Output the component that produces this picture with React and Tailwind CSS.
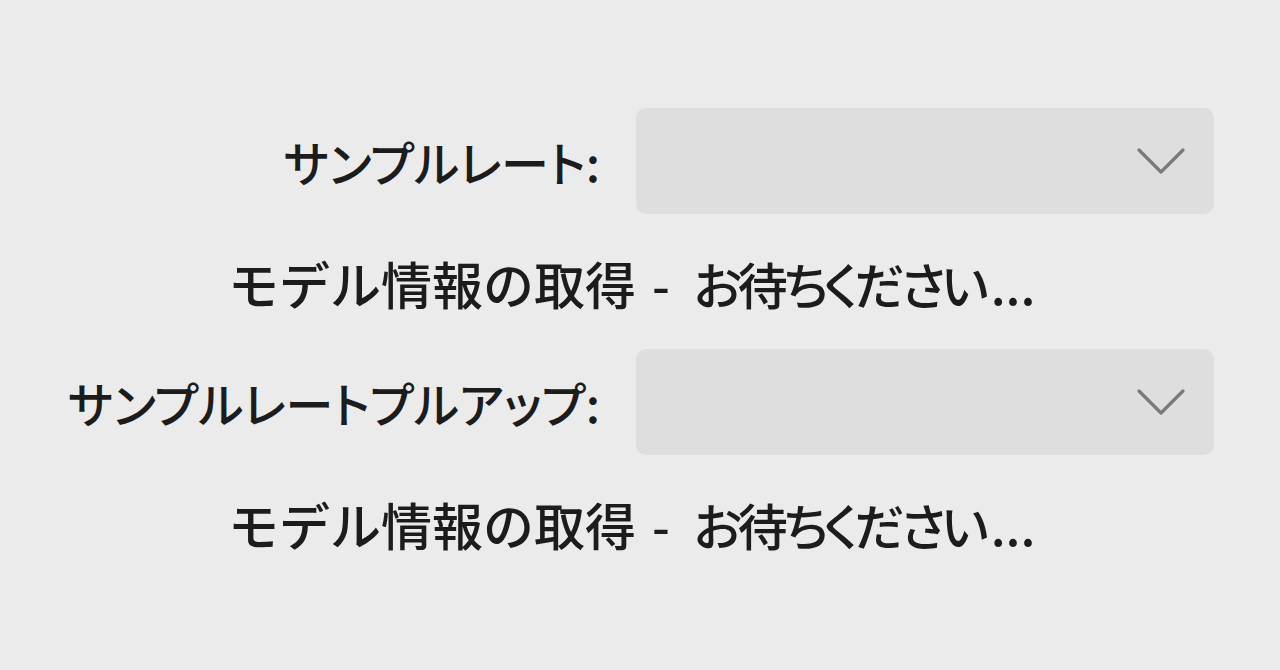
import React from 'react';

const font = {
  fontFamily: '"Noto Sans CJK JP", "Noto Sans", sans-serif',
};

// ドロップダウン（無効状態）
const Dropdown = () => (
  <div className="ml-[36px] w-[578px] h-[106px] rounded-[10px] bg-[#dedede] flex items-center justify-end pr-[28px]">
    <svg width="50" height="28" viewBox="0 0 50 28" fill="none">
      <path d="M3 3 L25 25 L47 3" stroke="#7a7a7a" strokeWidth="3.2" strokeLinecap="round" strokeLinejoin="round" />
    </svg>
  </div>
);

const Row = ({ label }) => (
  <div className="flex items-center">
    <div className="w-[600px] text-right text-[48px] font-medium leading-none text-[#1c1c1c] [font-feature-settings:'palt']">
      {label}
    </div>
    <Dropdown />
  </div>
);

const Status = () => (
  <div className="pl-[228px] flex items-baseline leading-none text-[#1c1c1c] font-medium whitespace-nowrap">
    <span className="text-[51px]">モデル情報の取得</span>
    <span className="text-[50px] ml-[16px]">-</span>
    <span className="text-[50px] ml-[24px] tracking-[-4px] [font-feature-settings:'palt']">お待ちください</span>
    <span className="text-[50px] ml-[6px]">...</span>
  </div>
);

export default function App() {
  return (
    <div className="w-[1280px] h-[670px] bg-[#ebebeb] overflow-hidden" style={font}>
      <div className="pt-[108px] flex flex-col">
        <Row label="サンプルレート:" />
        <div className="mt-[44px] mb-[40px]">
          <Status />
        </div>
        <Row label="サンプルレートプルアップ:" />
        <div className="mt-[44px]">
          <Status />
        </div>
      </div>
    </div>
  );
}
